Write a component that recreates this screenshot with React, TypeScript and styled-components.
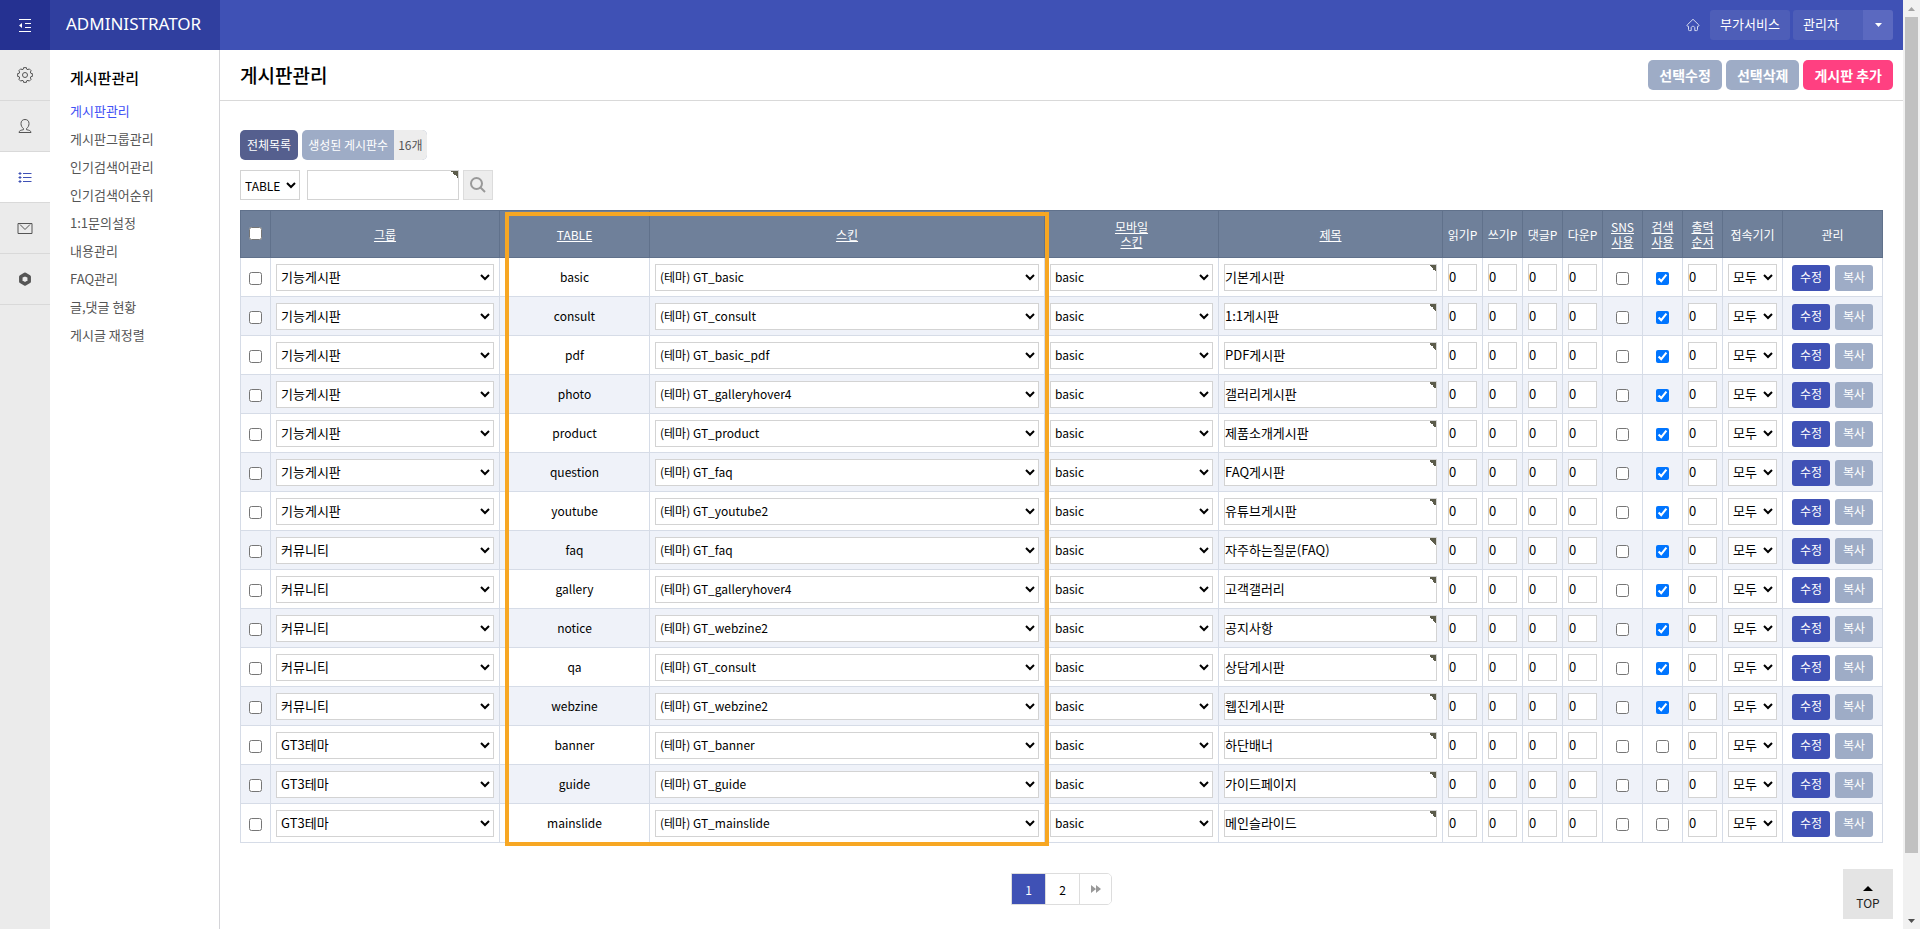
import React from 'react';
import styled, { createGlobalStyle, css } from 'styled-components';

const GlobalStyle = createGlobalStyle`
  * { box-sizing: border-box; }
  body {
    margin: 0;
    background: #fff;
    color: #000;
    font-family: "Noto Sans CJK KR", sans-serif;
    font-size: 12px;
  }
  a { color: inherit; text-decoration: none; }
  button, input, select { font-family: inherit; }
  ul { list-style: none; margin: 0; padding: 0; }
`;

const Page = styled.div`
  min-height: 100vh;
  padding-right: 17px;
  display: flex;
  flex-direction: column;
`;

const TopBar = styled.header`
  display: flex;
  height: 50px;
  background: #3f51b5;
  color: #fff;
`;

const MenuToggle = styled.button`
  display: flex;
  align-items: center;
  justify-content: center;
  width: 50px;
  padding: 0;
  border: 0;
  background: #253191;
  color: #fff;
`;

const Brand = styled.a`
  width: 170px;
  padding-left: 16px;
  background: #303f9f;
  font-family: "Noto Sans", sans-serif;
  font-size: 17px;
  line-height: 48px;
`;

const TopNav = styled.nav`
  display: flex;
  align-items: center;
  margin-left: auto;
  padding-right: 10px;
  font-size: 13px;
`;

const HomeLink = styled.a`
  display: flex;
  margin-right: 10px;
  color: #d5daf0;
`;

const ServiceLink = styled.a`
  width: 80px;
  height: 30px;
  margin-right: 3px;
  border-radius: 3px;
  background: #4e5eb8;
  line-height: 28px;
  text-align: center;
`;

const AccountButton = styled.button`
  display: flex;
  width: 100px;
  height: 30px;
  padding: 0 0 0 10px;
  overflow: hidden;
  border: 0;
  border-radius: 3px;
  background: #4e5eb8;
  color: #fff;
  font-size: 13px;
  line-height: 28px;
`;

const Caret = styled.span`
  display: flex;
  align-items: center;
  justify-content: center;
  width: 30px;
  height: 30px;
  margin-left: auto;
  background: #5b69c0;
`;

const Body = styled.div`
  display: flex;
  flex: 1;
`;

const Rail = styled.nav`
  flex: none;
  width: 50px;
  background: #ebebeb;
`;

const RailLink = styled.a<{ $active?: boolean }>`
  display: flex;
  align-items: center;
  justify-content: center;
  height: 51px;
  border-bottom: 1px solid #d9d9d9;
  background: ${(p) => (p.$active ? '#fff' : 'transparent')};
  color: ${(p) => (p.$active ? '#3f51b5' : '#555')};
`;

const SideMenu = styled.nav`
  flex: none;
  width: 170px;
  padding: 17px 20px;
  border-right: 1px solid #d4d4d8;
`;

const SideTitle = styled.h2`
  margin: 0 0 8px;
  font-size: 15px;
  font-weight: 500;
  line-height: 22px;
`;

const SideLink = styled.a<{ $active?: boolean }>`
  display: block;
  color: ${(p) => (p.$active ? '#3f51f5' : '#555')};
  font-size: 13px;
  line-height: 28px;
`;

const Main = styled.main`
  flex: 1;
  min-width: 0;
`;

const TitleBar = styled.div`
  display: flex;
  align-items: center;
  justify-content: space-between;
  height: 51px;
  padding: 0 10px 0 20px;
  border-bottom: 1px solid #d9d9d9;
`;

const PageTitle = styled.h1`
  margin: 0;
  font-size: 19px;
  font-weight: 500;
  line-height: 50px;
`;

const Actions = styled.div`
  display: flex;
  gap: 4px;
`;

const ActionButton = styled.button<{ $primary?: boolean }>`
  height: 30px;
  padding: 0 11px 1px;
  border: 0;
  border-radius: 5px;
  background: ${(p) => (p.$primary ? '#ff4081' : '#9eacc6')};
  color: #fff;
  font-size: 14px;
  font-weight: 700;
`;

const Content = styled.div`
  padding: 29px 20px 24px;
`;

const Summary = styled.div`
  display: flex;
  gap: 4px;
  margin-bottom: 10px;
  line-height: 30px;
`;

const AllLink = styled.a`
  padding: 0 7px;
  border-radius: 5px;
  background: #555f8e;
  color: #fff;
`;

const Count = styled.span`
  display: flex;
  overflow: hidden;
  border-radius: 5px;
  background: #9eacc6;
  color: #fff;
`;

const CountLabel = styled.span`
  padding: 0 6px;
`;

const CountValue = styled.span`
  padding: 0 4px;
  background: #ededed;
  color: #555;
`;

const SearchForm = styled.form`
  display: flex;
  margin-bottom: 10px;
`;

const control = css`
  height: 27px;
  border: 1px solid #d3d3d3;
  border-radius: 0;
  background-color: #fff;
  color: #000;
  font-size: 13px;
`;

const corner = css`
  background-image: linear-gradient(to top right, transparent 50%, #5c5c4b 50%);
  background-position: right top;
  background-repeat: no-repeat;
  background-size: 7px 7px;
`;

const SearchSelect = styled.select`
  ${control}
  width: 60px;
  height: 30px;
  margin-right: 7px;
  font-size: 12px;
`;

const SearchInput = styled.input`
  ${control}
  ${corner}
  width: 152px;
  height: 30px;
  margin-right: 4px;
  padding: 0 5px;
`;

const SearchButton = styled.button`
  display: flex;
  align-items: center;
  justify-content: center;
  width: 30px;
  height: 30px;
  padding: 0;
  border: 1px solid #dcdcdc;
  background: #ededed;
  color: #999;
`;

const TableWrap = styled.div`
  position: relative;
`;

const Highlight = styled.div`
  position: absolute;
  top: 2px;
  bottom: -3px;
  left: 265px;
  right: 834px;
  border: 4px solid #f7a723;
  pointer-events: none;
`;

const Table = styled.table`
  width: 100%;
  min-width: 1320px;
  table-layout: fixed;
  border-collapse: collapse;
`;

const Th = styled.th`
  height: 47px;
  padding: 0;
  border: 1px solid #60718b;
  background: #6f809a;
  color: #fff;
  font-weight: 400;
  line-height: 15px;
  white-space: nowrap;
`;

const SortLink = styled.a`
  text-decoration: underline;
  text-underline-offset: 1px;
`;

const Row = styled.tr`
  &:nth-child(even) { background: #eff2f9; }
`;

const Td = styled.td`
  height: 39px;
  padding: 1px 5px 0;
  border: 1px solid #d6dce7;
  line-height: 15px;
  text-align: center;
  white-space: nowrap;
`;

const TableLink = styled.a`
  display: block;
  padding-bottom: 2px;
`;

const Check = styled.input`
  display: block;
  width: 13px;
  height: 13px;
  margin: 2px auto 0;
`;

const HeadCheck = styled(Check)`
  margin: 0 auto 2px;
`;

const CellSelect = styled.select<{ $small?: boolean }>`
  ${control}
  display: block;
  width: 100%;
  padding-bottom: 2px;
  font-size: ${(p) => (p.$small ? '12px' : '13px')};
`;

const CellInput = styled.input<{ $marked?: boolean }>`
  ${control}
  ${(p) => p.$marked && corner}
  display: block;
  width: 100%;
  padding: 0 0 2px;
`;

const RowActions = styled.div`
  display: flex;
  justify-content: center;
  gap: 5px;
`;

const RowButton = styled.a<{ $muted?: boolean }>`
  padding: 0 8px 2px;
  border-radius: 3px;
  background: ${(p) => (p.$muted ? '#9eacc6' : '#3f51b5')};
  color: #fff;
  line-height: 24px;
`;

const Pager = styled.nav`
  display: flex;
  width: max-content;
  margin: 30px auto 0;
  overflow: hidden;
  border: 1px solid #ddd;
  border-radius: 0 5px 5px 0;
  font-size: 12px;
`;

const PageLink = styled.a<{ $active?: boolean }>`
  display: flex;
  align-items: center;
  justify-content: center;
  width: 34px;
  height: 30px;
  border-right: 1px solid #ddd;
  background: ${(p) => (p.$active ? '#3f51b5' : '#fff')};
  color: ${(p) => (p.$active ? '#fff' : '#000')};
`;

const LastLink = styled(PageLink)`
  width: 31px;
  border-right: 0;
  color: #999;
`;

const TopButton = styled.button`
  position: fixed;
  right: 27px;
  bottom: 10px;
  display: flex;
  flex-direction: column;
  align-items: center;
  width: 50px;
  height: 50px;
  padding: 17px 0 0;
  border: 0;
  background: #e4e4e4;
  color: #222;
  font-size: 12px;
  line-height: 24px;
`;

const ScrollTrack = styled.div`
  position: fixed;
  top: 0;
  right: 0;
  bottom: 0;
  display: flex;
  flex-direction: column;
  align-items: center;
  width: 17px;
  background: #f1f1f1;
`;

const ScrollArrow = styled.div`
  display: flex;
  flex: none;
  align-items: center;
  justify-content: center;
  width: 17px;
  height: 17px;
`;

const ScrollThumb = styled.div`
  width: 13px;
  height: 90%;
  margin-bottom: auto;
  background: #c1c1c1;
`;

const Triangle = ({ up, color, w = 7, h = 4 }: { up?: boolean; color: string; w?: number; h?: number }) => (
  <svg width={w} height={h} viewBox="0 0 8 4" preserveAspectRatio="none" fill={color} aria-hidden="true">
    <path d={up ? 'M0 4h8L4 0z' : 'M0 0h8L4 4z'} />
  </svg>
);

const columns: { label: React.ReactNode; width?: number; sort?: boolean }[] = [
  { label: '그룹', width: 229, sort: true },
  { label: 'TABLE', width: 150, sort: true },
  { label: '스킨', sort: true },
  { label: <>모바일<br />스킨</>, width: 174, sort: true },
  { label: '제목', width: 224, sort: true },
  { label: '읽기P', width: 40 },
  { label: '쓰기P', width: 40 },
  { label: '댓글P', width: 40 },
  { label: '다운P', width: 40 },
  { label: <>SNS<br />사용</>, width: 40, sort: true },
  { label: <>검색<br />사용</>, width: 40, sort: true },
  { label: <>출력<br />순서</>, width: 40, sort: true },
  { label: '접속기기', width: 60 },
  { label: '관리', width: 100 },
];

const boards: [string, string, string, string, boolean][] = [
  ['기능게시판', 'basic', 'GT_basic', '기본게시판', true],
  ['기능게시판', 'consult', 'GT_consult', '1:1게시판', true],
  ['기능게시판', 'pdf', 'GT_basic_pdf', 'PDF게시판', true],
  ['기능게시판', 'photo', 'GT_galleryhover4', '갤러리게시판', true],
  ['기능게시판', 'product', 'GT_product', '제품소개게시판', true],
  ['기능게시판', 'question', 'GT_faq', 'FAQ게시판', true],
  ['기능게시판', 'youtube', 'GT_youtube2', '유튜브게시판', true],
  ['커뮤니티', 'faq', 'GT_faq', '자주하는질문(FAQ)', true],
  ['커뮤니티', 'gallery', 'GT_galleryhover4', '고객갤러리', true],
  ['커뮤니티', 'notice', 'GT_webzine2', '공지사항', true],
  ['커뮤니티', 'qa', 'GT_consult', '상담게시판', true],
  ['커뮤니티', 'webzine', 'GT_webzine2', '웹진게시판', true],
  ['GT3테마', 'banner', 'GT_banner', '하단배너', false],
  ['GT3테마', 'guide', 'GT_guide', '가이드페이지', false],
  ['GT3테마', 'mainslide', 'GT_mainslide', '메인슬라이드', false],
];

const sideItems = [
  '게시판관리', '게시판그룹관리', '인기검색어관리', '인기검색어순위', '1:1문의설정',
  '내용관리', 'FAQ관리', '글,댓글 현황', '게시글 재정렬',
];

const Line = ({ children, size = 16 }: { children: React.ReactNode; size?: number }) => (
  <svg width={size} height={size} viewBox={`0 0 ${size} ${size}`} fill="none" stroke="currentColor" strokeWidth="1" aria-hidden="true">
    {children}
  </svg>
);

const gearPath = (() => {
  const teeth = 8;
  const points: string[] = [];
  for (let i = 0; i < teeth; i++) {
    const base = (i * 2 * Math.PI) / teeth - Math.PI / 2;
    [[-0.27, 6.1], [-0.19, 7.5], [0.19, 7.5], [0.27, 6.1]].forEach(([offset, radius]) => {
      const a = base + offset;
      points.push(`${(8 + radius * Math.cos(a)).toFixed(2)} ${(8 + radius * Math.sin(a)).toFixed(2)}`);
    });
  }
  return `M${points.join('L')}Z`;
})();

export default function App() {
  return (
    <>
      <GlobalStyle />
      <Page>
        <TopBar>
          <MenuToggle aria-label="메뉴">
            <Line size={14}>
              <path d="M1 1.5h12M7 5.5h6M7 9.5h6M1 13.5h12" />
              <path d="M4 5v5L1 7.500z" fill="currentColor" stroke="none" />
            </Line>
          </MenuToggle>
          <Brand href="#">ADMINISTRATOR</Brand>
          <TopNav>
            <HomeLink href="#" aria-label="홈">
              <Line size={14}>
                <path d="M7 1.300 12.700 6.800c.8.900-.1 1.900-1.200 1.500v3.400c0 .6-.3.900-.9.900H8.800V9.800c0-2-3.600-2-3.600 0v2.800H3.400c-.6 0-.9-.3-.9-.9V8.300c-1.100.4-2-.6-1.200-1.500z" strokeLinejoin="round" />
              </Line>
            </HomeLink>
            <ServiceLink href="#">부가서비스</ServiceLink>
            <AccountButton>
              관리자
              <Caret><Triangle color="#fff" /></Caret>
            </AccountButton>
          </TopNav>
        </TopBar>
        <Body>
          <Rail>
            <RailLink href="#" aria-label="환경설정">
              <Line><path d={gearPath} strokeLinejoin="round" /><circle cx="8" cy="8" r="2.500" /></Line>
            </RailLink>
            <RailLink href="#" aria-label="회원관리">
              <Line>
                <path d="M6.500 10.500C4.800 9.500 4 7.500 4 5.500 4 3 5.500 1.500 8 1.500S12 3 12 5.500c0 2-.8 4-2.500 5v1.200c2.500.4 4.500 1 4.500 2.800H2c0-1.800 2-2.400 4.500-2.800z" />
              </Line>
            </RailLink>
            <RailLink href="#" aria-label="게시판관리" $active>
              <Line>
                <path d="M6 4.500h8.500M6 8.500h8.500M6 12.500h8.500M1.500 4.500h3M1.500 8.500h3M1.500 12.500h3M3 3v3M3 7v3M3 11v3" />
              </Line>
            </RailLink>
            <RailLink href="#" aria-label="쇼핑몰관리">
              <Line><path d="M1 3.500h14v10H1zM3 4.500l5 5 5-5" /></Line>
            </RailLink>
            <RailLink href="#" aria-label="부가기능">
              <Line><path d="M8 3.300l4.200 2.400v4.800L8 12.900l-4.200-2.400V5.700z" strokeWidth="3.500" strokeLinejoin="round" /></Line>
            </RailLink>
          </Rail>
          <SideMenu>
            <SideTitle>게시판관리</SideTitle>
            <ul>
              {sideItems.map((item, i) => (
                <li key={item}><SideLink href="#" $active={i === 0}>{item}</SideLink></li>
              ))}
            </ul>
          </SideMenu>
          <Main>
            <TitleBar>
              <PageTitle>게시판관리</PageTitle>
              <Actions>
                <ActionButton>선택수정</ActionButton>
                <ActionButton>선택삭제</ActionButton>
                <ActionButton $primary>게시판 추가</ActionButton>
              </Actions>
            </TitleBar>
            <Content>
              <Summary>
                <AllLink href="#">전체목록</AllLink>
                <Count>
                  <CountLabel>생성된 게시판수</CountLabel>
                  <CountValue>16개</CountValue>
                </Count>
              </Summary>
              <SearchForm onSubmit={(e) => e.preventDefault()}>
                <SearchSelect aria-label="검색대상"><option>TABLE</option></SearchSelect>
                <SearchInput type="text" aria-label="검색어" />
                <SearchButton aria-label="검색">
                  <svg width="16" height="16" viewBox="0 0 16 16" fill="none" stroke="currentColor" strokeWidth="2" aria-hidden="true">
                    <circle cx="6.500" cy="6.500" r="5.500" /><path d="M10.500 10.500 15 15" />
                  </svg>
                </SearchButton>
              </SearchForm>
              <TableWrap>
                <Table>
                  <colgroup>
                    <col width={30} />
                    {columns.map((c, i) => <col key={i} width={c.width} />)}
                  </colgroup>
                  <thead>
                    <tr>
                      <Th><HeadCheck type="checkbox" aria-label="게시판 전체" /></Th>
                      {columns.map((c, i) => (
                        <Th key={i} scope="col">{c.sort ? <SortLink href="#">{c.label}</SortLink> : c.label}</Th>
                      ))}
                    </tr>
                  </thead>
                  <tbody>
                    {boards.map(([group, table, skin, title, searchable]) => (
                      <Row key={table}>
                        <Td><Check type="checkbox" aria-label={`${title} 선택`} /></Td>
                        <Td><CellSelect aria-label="그룹"><option>{group}</option></CellSelect></Td>
                        <Td><TableLink href="#">{table}</TableLink></Td>
                        <Td><CellSelect $small aria-label="스킨"><option>(테마) {skin}</option></CellSelect></Td>
                        <Td><CellSelect $small aria-label="모바일 스킨"><option>basic</option></CellSelect></Td>
                        <Td><CellInput $marked aria-label="제목" defaultValue={title} /></Td>
                        {['읽기', '쓰기', '댓글', '다운'].map((point) => (
                          <Td key={point}><CellInput aria-label={`${point} 포인트`} defaultValue="0" /></Td>
                        ))}
                        <Td><Check type="checkbox" aria-label="SNS 사용" /></Td>
                        <Td><Check type="checkbox" aria-label="검색 사용" defaultChecked={searchable} /></Td>
                        <Td><CellInput aria-label="출력 순서" defaultValue="0" /></Td>
                        <Td><CellSelect aria-label="접속기기"><option>모두</option></CellSelect></Td>
                        <Td>
                          <RowActions>
                            <RowButton href="#">수정</RowButton>
                            <RowButton href="#" $muted>복사</RowButton>
                          </RowActions>
                        </Td>
                      </Row>
                    ))}
                  </tbody>
                </Table>
                <Highlight />
              </TableWrap>
              <Pager aria-label="페이지">
                <PageLink href="#" $active>1</PageLink>
                <PageLink href="#">2</PageLink>
                <LastLink href="#" aria-label="맨끝">
                  <svg width="10" height="8" viewBox="0 0 10 8" fill="currentColor" aria-hidden="true">
                    <path d="M0 0l5 4-5 4zM5 0l5 4-5 4z" />
                  </svg>
                </LastLink>
              </Pager>
            </Content>
          </Main>
        </Body>
      </Page>
      <TopButton>
        <Triangle up color="#000" w={10} h={5} />
        TOP
      </TopButton>
      <ScrollTrack aria-hidden="true">
        <ScrollArrow><Triangle up color="#a3a3a3" /></ScrollArrow>
        <ScrollThumb />
        <ScrollArrow><Triangle color="#505050" /></ScrollArrow>
      </ScrollTrack>
    </>
  );
}
